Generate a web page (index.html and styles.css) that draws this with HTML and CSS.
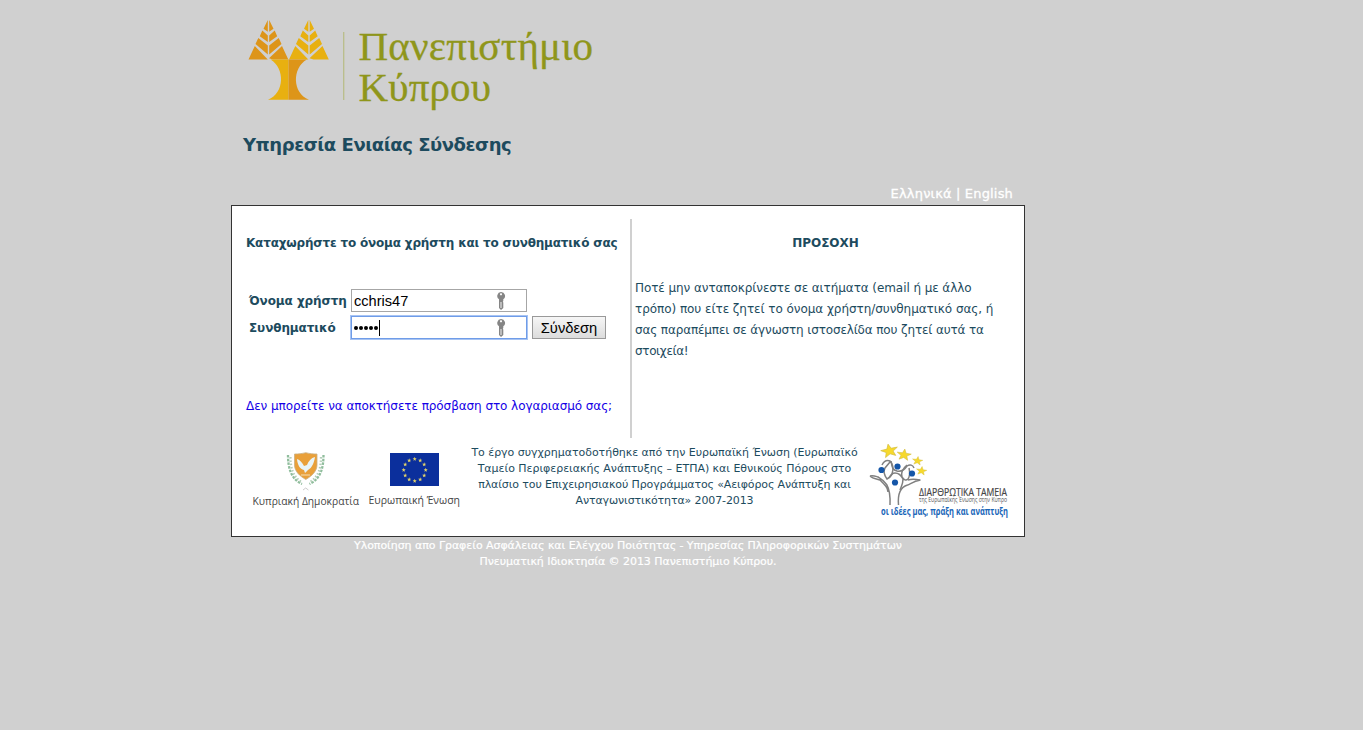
FILE: index.html
```html
<!DOCTYPE html>
<html lang="el">
<head>
<meta charset="utf-8">
<title>Υπηρεσία Ενιαίας Σύνδεσης</title>
<link rel="stylesheet" href="styles.css">
</head>
<body>
<svg class="defs" width="0" height="0">
  <defs>
    <path id="crown" d="M267.800 20v11.700l-4.300-3zM269.200 20v11.700l4.300-3zM262.300 30.500l5.500 5v6.500l-8-5.700zM274.700 30.500l-5.500 5v6.500l8-5.700zM258.300 38l9.500 7.500v9l-12.300-10.500zM278.700 38l-9.500 7.500v9l12.300-10.500zM254.800 46l13 13.500H248.500zM282 46l6.300 13.500h-15.300l-4-1.200z"/>
    <g id="key" fill="#858585">
      <path fill-rule="evenodd" d="M5 0a4 4 0 0 1 2.300 7.300V9l-.5.700.5.800V16L5 18l-2-2V7.300A4 4 0 0 1 5 0zM5 1.300a1 1 0 1 0 .01 0z"/>
      <path stroke="#fff" stroke-width=".9" d="M5 10v6"/>
    </g>
    <path id="star" d="M0-1l.24.66.7.03-.55.43.19.68L0 .41l-.58.39.19-.68-.55-.43.7-.03z"/>
    <g id="laurel" fill="none" stroke="#8fbd9c" stroke-width="2.300">
      <path stroke-dasharray="2.500 1.200" d="M288 455c0 13 3 24 14 29"/>
      <path stroke-dasharray="1.500 1.800" stroke="#b5cfb9" d="M290.500 457c0 12 3 20 11 25"/>
    </g>
  </defs>
</svg>
<div class="page">
  <header class="brand">
    <svg width="400" height="118" viewBox="231 0 400 118">
      <use href="#crown" fill="#dd9519"/>
      <use href="#crown" x="40.500" fill="#e8b010"/>
      <path fill="#e8b010" d="M270.500 59.500h18v40.300h-20.500C285 93 285 68 270.500 59.500z"/>
      <path fill="#dd9519" d="M288.500 59.500h18.300C292 68 292 93 309 99.800h-20.500z"/>
      <path stroke="#b9bd8a" stroke-width="1.300" d="M343.700 32v68"/>
      <g class="logo-text">
        <text x="358.500" y="60" textLength="234.500">Πανεπιστήμιο</text>
        <text x="358.500" y="100.500" textLength="132.500">Κύπρου</text>
      </g>
    </svg>
  </header>
  <h1>Υπηρεσία Ενιαίας Σύνδεσης</h1>
  <nav class="lang">Ελληνικά | English</nav>
  <main class="panel">
    <div class="columns">
      <section class="login">
        <h2>Καταχωρήστε το όνομα χρήστη και το συνθηματικό σας</h2>
        <div class="row">
          <label>Όνομα χρήστη</label>
          <div class="field"><span>cchris47</span><svg width="10" height="18"><use href="#key"/></svg></div>
        </div>
        <div class="row">
          <label>Συνθηματικό</label>
          <div class="field focus"><span class="dots"><i></i><i></i><i></i><i></i><i></i><b class="caret"></b></span><svg width="10" height="18"><use href="#key"/></svg></div>
          <button>Σύνδεση</button>
        </div>
        <a class="help">Δεν μπορείτε να αποκτήσετε πρόσβαση στο λογαριασμό σας;</a>
      </section>
      <section class="notice">
        <h2>ΠΡΟΣΟΧΗ</h2>
        <p>Ποτέ μην ανταποκρίνεστε σε αιτήματα (email ή με άλλο<br><span class="loose">τρόπο) που είτε ζητεί το όνομα χρήστη/συνθηματικό σας, ή</span><br><span class="tight">σας παραπέμπει σε άγνωστη ιστοσελίδα που ζητεί αυτά τα</span><br><span class="tighter">στοιχεία!</span></p>
      </section>
    </div>
    <div class="funding">
      <svg width="238" height="90" viewBox="232 438 238 90">
        <use href="#laurel"/>
        <use href="#laurel" transform="translate(611.500) scale(-1 1)"/>
        <path fill="#e9a03a" stroke="#c9b083" stroke-width=".8" d="M294.500 454c4 0 7-.3 11.300-1.300 4.200 1 7.200 1.300 11.200 1.300v11c0 6-5 11-11.200 14.500-6.300-3.500-11.300-8.500-11.300-14.500z"/>
        <path fill="#e8f4f8" d="M297 459c3 1 5.500 4 7 7l3-1c1.500-4 4-7 8-8-1 6-3 11-7 13l-3 3-1-3c-4-1-6.500-5-7-11z"/>
        <path stroke="#f5dfb4" d="M301 475h9"/>
        <path fill="none" stroke="#ccc" d="M303 490l2.700-2 2.700 2"/>
        <path fill="#0b2f9c" d="M390 453h49v33h-49z"/>
        <g fill="#e3d36a">
          <use href="#star" transform="translate(414.700 459) scale(2.200)"/><use href="#star" transform="translate(420.200 460.500) scale(2.200)"/><use href="#star" transform="translate(424.200 464.500) scale(2.200)"/><use href="#star" transform="translate(425.700 470) scale(2.200)"/><use href="#star" transform="translate(424.200 475.500) scale(2.200)"/><use href="#star" transform="translate(420.200 479.500) scale(2.200)"/><use href="#star" transform="translate(414.700 481) scale(2.200)"/><use href="#star" transform="translate(409.200 479.500) scale(2.200)"/><use href="#star" transform="translate(405.200 475.500) scale(2.200)"/><use href="#star" transform="translate(403.700 470) scale(2.200)"/><use href="#star" transform="translate(405.200 464.500) scale(2.200)"/><use href="#star" transform="translate(409.200 460.500) scale(2.200)"/>
        </g>
        <g class="caption">
          <text x="252.500" y="505" textLength="106.500" lengthAdjust="spacingAndGlyphs">Κυπριακή Δημοκρατία</text>
          <text x="368.500" y="504" textLength="91.500" lengthAdjust="spacingAndGlyphs">Ευρωπαική Ένωση</text>
        </g>
      </svg>
      <p>Το έργο συγχρηματοδοτήθηκε από την Ευρωπαϊκή Ένωση (Ευρωπαϊκό<br>Ταμείο Περιφερειακής Ανάπτυξης – ΕΤΠΑ) και Εθνικούς Πόρους στο<br><span class="tight">πλαίσιο του Επιχειρησιακού Προγράμματος «Αειφόρος Ανάπτυξη και</span><br><span class="tight">Ανταγωνιστικότητα» 2007-2013</span></p>
      <svg width="160" height="90" viewBox="859 438 160 90">
        <g fill="#f7d92b" stroke="#d2bc3c" stroke-width=".08">
          <use href="#star" transform="translate(889.500 451) rotate(-12) scale(9 7)"/>
          <use href="#star" transform="translate(904 455) rotate(8) scale(7.500 6)"/>
          <use href="#star" transform="translate(917.500 461) rotate(8) scale(5.500 4.500)"/>
          <use href="#star" transform="translate(921.500 471) rotate(8) scale(5.500 4.500)"/>
        </g>
        <g fill="none" stroke="#808080" stroke-width="1.500">
          <path d="M870 476c3-1 5 0 8 1 5 3 13 6 12 28M870 476c3 3 8 3 10 4 5 5 8 8 8 12"/>
          <path d="M898.500 505c-1-12 2-18 9-20 3-1 6-4 13-5M920 480c-5-1-9-1-12 0"/>
          <path d="M882 465c2-4 5-5 8-4 3 3 4 7 2 13-1 3-3 4-5 5-3-4-4-7-2-11l5-6"/>
          <path d="M891 461c1 7 2 9 6 10 5 1 8-2 10-5 3-2 6-1 7 2"/>
          <path d="M907 465c-5 4-6 8-5 12 2 3 4 4 6 2 2-3 2-7 1-11M889 478c2-4 4-5 6-5 4 0 6 2 8 6 0 6-2 8-3 11"/>
        </g>
        <g fill="#1556a8"><circle cx="881.500" cy="470" r="3.100"/><circle cx="897.500" cy="466.500" r="3.100"/><circle cx="912" cy="473.500" r="3.100"/><circle cx="895" cy="482.500" r="3.100"/></g>
        <text class="funds f1" x="919" y="495.500" textLength="88" lengthAdjust="spacingAndGlyphs">ΔΙΑΡΘΡΩΤΙΚΑ ΤΑΜΕΙΑ</text>
        <text class="funds f2" x="919" y="502.300" textLength="88" lengthAdjust="spacingAndGlyphs">της Ευρωπαϊκής Ένωσης στην Κύπρο</text>
        <text class="funds f3" x="881" y="514.500" textLength="127" lengthAdjust="spacingAndGlyphs">οι ιδέες μας, πράξη και ανάπτυξη</text>
      </svg>
    </div>
  </main>
  <footer>Υλοποίηση απο Γραφείο Ασφάλειας και Ελέγχου Ποιότητας - Υπηρεσίας Πληροφορικών Συστημάτων<br>Πνευματική Ιδιοκτησία © 2013 Πανεπιστήμιο Κύπρου.</footer>
</div>
</body>
</html>
```
FILE: styles.css
```css
body {
  margin: 0;
  background: #d0d0d0;
  font-family: "DejaVu Sans", sans-serif;
  color: #1d4b5e;
}
.defs { display: block; }
.page { width: 794px; margin-left: 231px; white-space: nowrap; }
.brand { height: 118px; }
.brand svg { display: block; }
.logo-text {
  font: 41px "Liberation Serif", serif;
  fill: #8f961b;
  stroke: #8f961b;
  stroke-width: .3px;
}
h1 {
  margin: 0;
  padding: 12px 12px 0;
  height: 54px;
  font-size: 18px;
  line-height: 30px;
  letter-spacing: -.45px;
}
.lang {
  height: 21px;
  margin-top: -12px;
  padding: 12px 12px 0 0;
  text-align: right;
  font-size: 13px;
  line-height: 19px;
  letter-spacing: .17px;
  color: #fff;
  -webkit-text-stroke: .3px #fff;
}
.panel {
  box-sizing: border-box;
  height: 332px;
  padding-top: 13px;
  border: 1px solid #333;
  background: #fff;
}
.columns { display: flex; height: 219px; }
h2 { margin: 0; font-size: 12px; line-height: 20px; }
.login {
  box-sizing: border-box;
  width: 400px;
  padding: 14px 0 0 14px;
  border-right: 2px solid #d0d0d0;
}
.login h2 { letter-spacing: -.18px; margin-bottom: 34px; }
.row { display: flex; align-items: center; height: 27px; }
label {
  box-sizing: border-box;
  width: 102px;
  padding-left: 3px;
  font-size: 12px;
  font-weight: bold;
  letter-spacing: -.08px;
}
.row .field { margin-left: 3px; }
.field {
  box-sizing: border-box;
  display: flex;
  align-items: center;
  justify-content: space-between;
  width: 176px;
  height: 23px;
  padding: 0 20px 0 2px;
  border: 1px solid #a6a6a6;
  font: 14.6px "Liberation Sans", sans-serif;
  color: #000;
}
.field.focus { border-color: #6f9ce8; box-shadow: 0 0 0 1px #a8c4f3; }
.dots { display: flex; align-items: center; gap: 1px; }
.dots i { width: 4px; height: 4px; border-radius: 2px; background: #000; }
.caret { width: 1px; height: 16px; background: #000; }
button {
  width: 74px;
  height: 23px;
  margin-left: 5px;
  padding: 0;
  border: 1px solid #999;
  border-radius: 0;
  background: linear-gradient(#f6f6f6, #dcdcdc);
  font: 14.7px "Liberation Sans", sans-serif;
  color: #000;
}
.help {
  display: block;
  margin-top: 55px;
  font-size: 12px;
  line-height: 20px;
  letter-spacing: -.07px;
  color: #1400e6;
}
.notice { width: 387px; padding: 14px 0 0 3px; }
.notice h2 { width: 381px; text-align: center; margin-bottom: 25px; }
.notice p { margin: 0; font-size: 12px; line-height: 21px; letter-spacing: -.08px; }
.notice .loose { letter-spacing: -.05px; }
.tight { letter-spacing: -.14px; }
.tighter { letter-spacing: -.35px; }
.funding { display: flex; height: 90px; }
.funding p {
  width: 389px;
  margin: 0;
  padding-top: 7px;
  text-align: center;
  font-size: 11px;
  line-height: 16px;
  letter-spacing: -.03px;
}
.funding p .tight { letter-spacing: -.12px; }
.caption { font: 11px "Open Sans", sans-serif; fill: #444; }
.funds { font-family: "Open Sans", sans-serif; }
.f1 { font-size: 11.5px; fill: #444; stroke: #444; stroke-width: .2px; }
.f2 { font-size: 7px; fill: #555; }
.f3 { font-size: 10px; font-weight: bold; fill: #1a66b8; }
footer {
  padding-top: 1px;
  text-align: center;
  font-size: 11px;
  line-height: 16px;
  letter-spacing: -.05px;
  color: #fff;
  -webkit-text-stroke: .2px #fff;
}
```
